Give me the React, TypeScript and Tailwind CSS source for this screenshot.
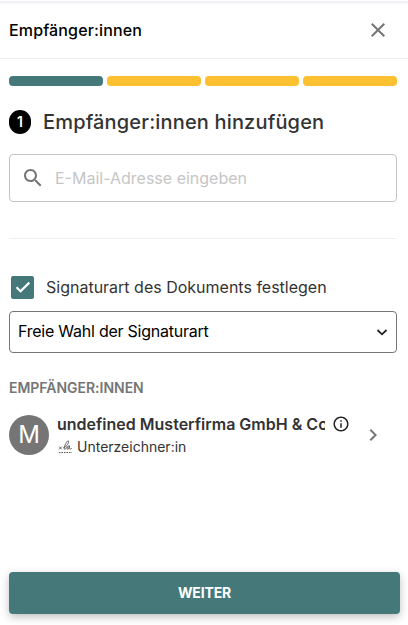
const steps = [true, false, false, false];

function Icon({ d, className }: { d: string; className: string }) {
  return (
    <svg viewBox="0 0 24 24" fill="currentColor" className={className} aria-hidden="true">
      <path d={d} />
    </svg>
  );
}

const closePath =
  "M19 6.41 17.59 5 12 10.59 6.41 5 5 6.41 10.59 12 5 17.59 6.41 19 12 13.41 17.59 19 19 17.59 13.41 12z";
const searchPath =
  "M15.5 14h-.79l-.28-.27C15.41 12.59 16 11.11 16 9.5 16 5.91 13.09 3 9.5 3S3 5.91 3 9.5 5.91 16 9.5 16c1.61 0 3.09-.59 4.23-1.57l.27.28v.79l5 4.99L20.49 19l-4.99-5zm-6 0C7.01 14 5 11.99 5 9.5S7.01 5 9.5 5 14 7.01 14 9.5 11.99 14 9.5 14z";
const infoPath =
  "M11 7h2v2h-2zm0 4h2v6h-2zm1-9C6.48 2 2 6.48 2 12s4.48 10 10 10 10-4.48 10-10S17.52 2 12 2zm0 18c-4.41 0-8-3.59-8-8s3.59-8 8-8 8 3.59 8 8-3.59 8-8 8z";
const chevronPath = "M10 6 8.59 7.41 13.17 12l-4.58 4.59L10 18l6-6z";

function SignatureIcon() {
  return (
    <svg
      width="15"
      height="14"
      viewBox="0 0 15 14"
      fill="none"
      stroke="#555"
      strokeWidth="0.9"
      className="shrink-0"
      aria-hidden="true"
    >
      <path d="M2 6.600l2.800 2.800M4.800 6.600L2 9.400" />
      <path d="M6.300 7.600C9 6.800 12.400 2.900 11.600 1.100C10.500-.5 7.700 4.600 7.200 8.200C7 10.400 8.900 9.300 9.900 6.400" />
      <path d="M12.400 5.800C10.900 4.900 9.400 8.900 10.600 9.300C11.700 9.600 12.500 7.300 12.400 5.800C11.900 8.500 12.400 9.800 14.700 8.400" />
      <path d="M2 12.500h13" strokeWidth="1" strokeDasharray="1.500 1" />
    </svg>
  );
}

export default function App() {
  return (
    <div className="flex h-[625px] w-[408px] flex-col overflow-hidden bg-white font-['Inter','Liberation_Sans',sans-serif] text-[#333]">
      <div className="h-[5px] shrink-0 border-t border-white bg-linear-to-b from-[#ededf3] to-white" />
      <header className="flex h-[54px] shrink-0 items-center justify-between border-b border-[#ededf0] pr-[18px] pb-[3px] pl-[9px]">
        <h1 className="text-base leading-6 font-medium tracking-[0.14px] text-black">Empfänger:innen</h1>
        <button aria-label="Schließen" className="text-[#757575]">
          <Icon d={closePath} className="size-6" />
        </button>
      </header>

      <main className="flex flex-1 flex-col pt-[17px] pr-[11px] pl-[9px]">
        <div className="grid h-2.5 shrink-0 grid-cols-4 gap-1">
          {steps.map((done, i) => (
            <div key={i} className={done ? "rounded bg-[#457979]" : "rounded bg-[#fcc030]"} />
          ))}
        </div>

        <div className="mt-6 flex h-6 shrink-0 items-center gap-3">
          <span className="flex h-6 w-[22px] items-center justify-center rounded-full bg-black text-sm font-semibold text-white">
            1
          </span>
          <h2 className="text-xl leading-6 font-medium tracking-[0.16px] whitespace-nowrap">Empfänger:innen hinzufügen</h2>
        </div>

        <div className="mt-5 flex h-12 shrink-0 items-center gap-[10px] rounded border border-[#c4c4c4] pl-[11px]">
          <Icon d={searchPath} className="size-6 shrink-0 text-[#757575]" />
          <input
            placeholder="E-Mail-Adresse eingeben"
            className="w-full min-w-0 bg-transparent text-base outline-none placeholder:text-[#c6c6c6]"
          />
        </div>

        <hr className="mt-9 shrink-0 border-[#f0f0f0]" />

        <label className="mt-9 flex h-6 shrink-0 items-center gap-3 pl-0.5">
          <span className="flex size-[23px] items-center justify-center rounded-[2px] bg-[#457979] pb-px">
            <svg viewBox="0 0 16 16" className="size-4" fill="none" stroke="white" strokeWidth="2.2">
              <path d="M1.500 8.200l4 4L14.300 3.600" />
            </svg>
          </span>
          <span className="text-base leading-6">Signaturart des Dokuments festlegen</span>
        </label>

        <div className="mt-3 flex h-[42px] shrink-0 items-center justify-between rounded border border-[#767676] pr-2 pl-2 text-base text-black">
          <span className="pb-0.5 tracking-[-0.24px]">Freie Wahl der Signaturart</span>
          <svg viewBox="0 0 12 12" className="size-3" fill="none" stroke="#222" strokeWidth="1.8">
            <path d="M1.500 4l4.500 4.300L10.500 4" />
          </svg>
        </div>

        <h3 className="mt-[25px] shrink-0 text-sm leading-5 font-semibold tracking-[-0.02px] text-[#757575]">EMPFÄNGER:INNEN</h3>

        <div className="mt-[14px] flex h-[46px] shrink-0 items-center">
          <div className="flex size-10 shrink-0 items-center justify-center rounded-full bg-[#757575] text-2xl text-white">
            M
          </div>
          <div className="ml-2 w-[293px]">
            <div className="flex h-6 items-center">
              <span className="w-[268px] overflow-hidden text-base leading-6 font-semibold whitespace-nowrap">
                undefined Musterfirma GmbH &amp; Co. KG
              </span>
              <Icon d={infoPath} className="ml-[7px] size-[18px] shrink-0 text-[#222]" />
            </div>
            <div className="flex h-[22px] items-center gap-[5px] text-sm">
              <SignatureIcon />
              <span>Unterzeichner:in</span>
            </div>
          </div>
          <Icon d={chevronPath} className="ml-[11px] size-6 shrink-0 text-[#757575]" />
        </div>

        <button className="mt-auto mr-[-3px] mb-[11px] h-[42px] shrink-0 rounded bg-[#457979] text-sm font-bold tracking-[-0.15px] text-white shadow-[0_3px_8px_rgba(0,0,0,0.25)]">
          WEITER
        </button>
      </main>
    </div>
  );
}
